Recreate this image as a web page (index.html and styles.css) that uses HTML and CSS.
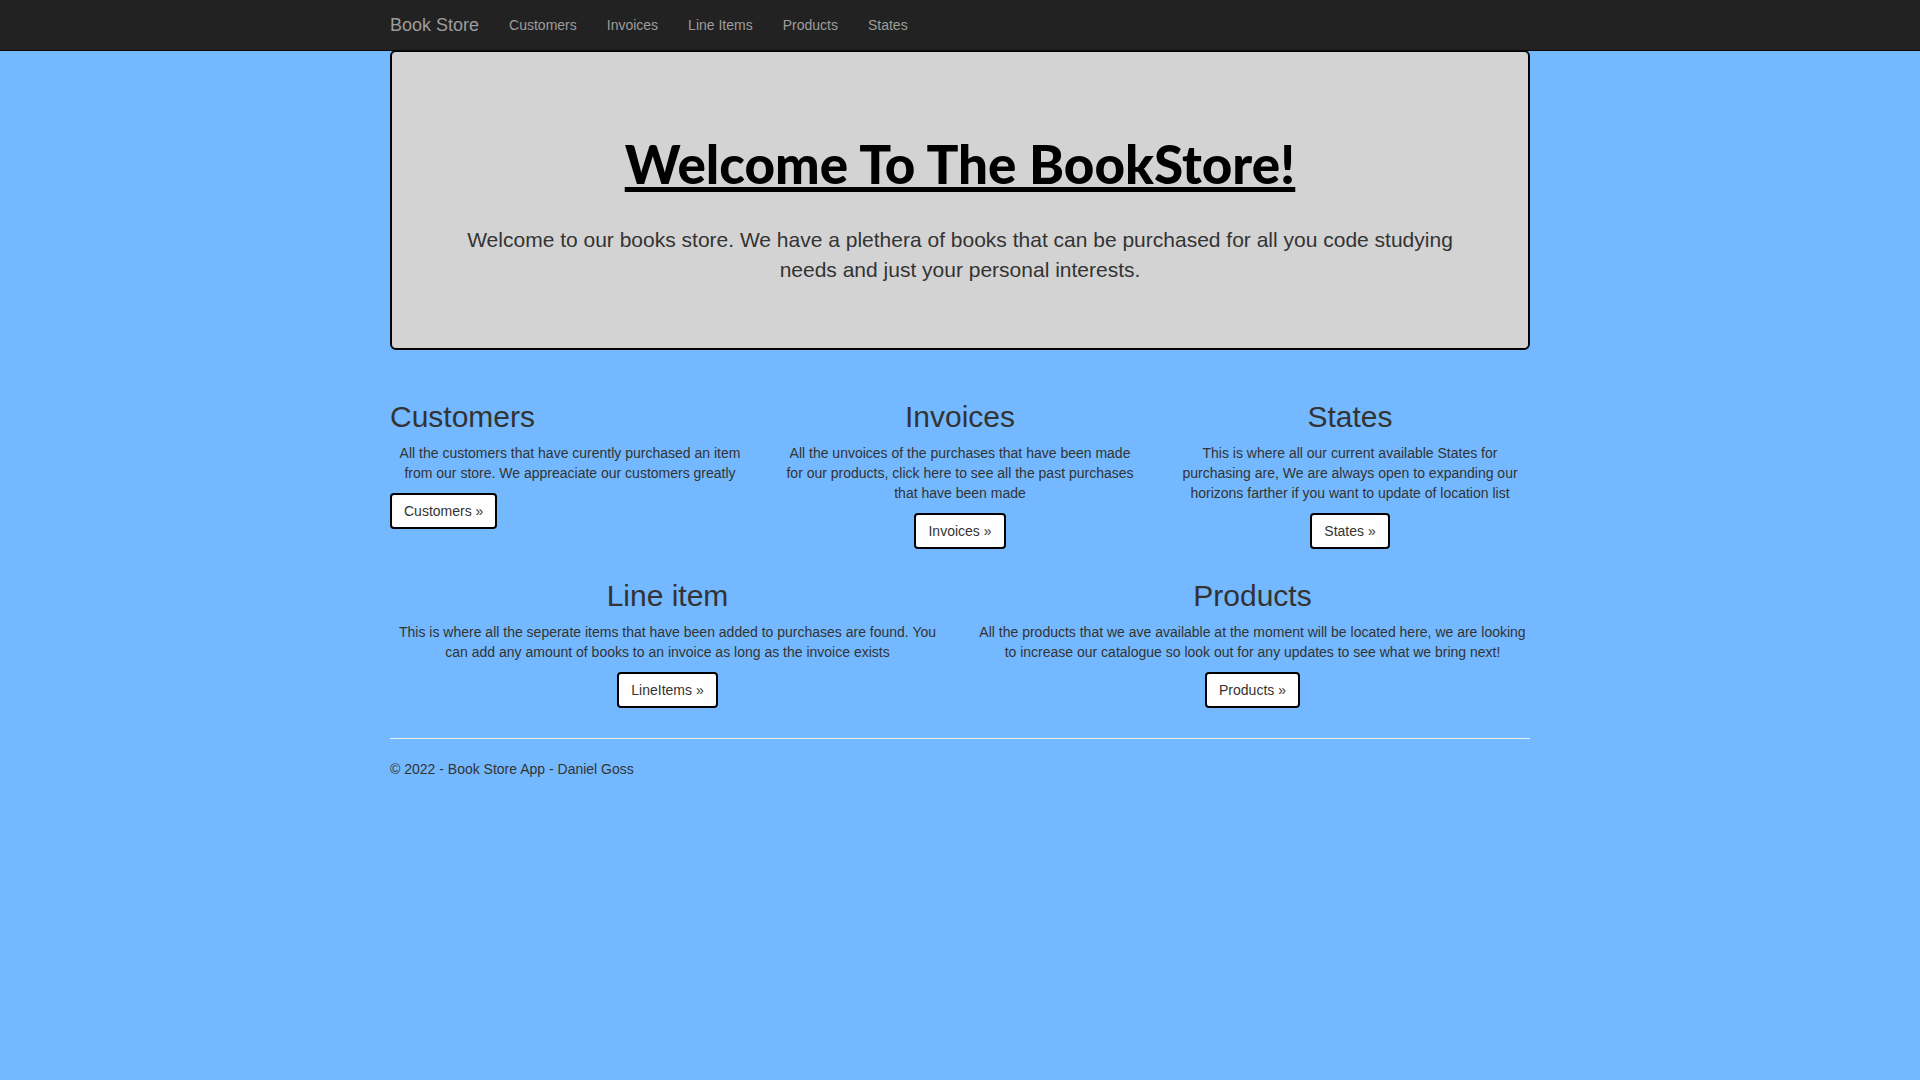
FILE: index.html
```html
<!DOCTYPE html>
<html lang="en">
<head>
<meta charset="utf-8">
<meta name="viewport" content="width=device-width, initial-scale=1">
<title>Book Store</title>
<link rel="stylesheet" href="styles.css">
</head>
<body>
<header class="navbar">
  <nav class="container navbar-inner">
    <a class="navbar-brand" href="#">Book Store</a>
    <ul class="navbar-nav">
      <li><a href="#">Customers</a></li>
      <li><a href="#">Invoices</a></li>
      <li><a href="#">Line Items</a></li>
      <li><a href="#">Products</a></li>
      <li><a href="#">States</a></li>
    </ul>
  </nav>
</header>
<main class="container">
  <section class="jumbotron">
    <h1>Welcome To The BookStore!</h1>
    <p class="lead">Welcome to our books store. We have a plethera of books that can be purchased for all you code studying needs and just your personal interests.</p>
  </section>
  <div class="row row-thirds">
    <section class="card card-start">
      <h2>Customers</h2>
      <p>All the customers that have curently purchased an item from our store. We appreaciate our customers greatly</p>
      <a class="btn" href="#">Customers »</a>
    </section>
    <section class="card">
      <h2>Invoices</h2>
      <p>All the unvoices of the purchases that have been made for our products, click here to see all the past purchases that have been made</p>
      <a class="btn" href="#">Invoices »</a>
    </section>
    <section class="card">
      <h2>States</h2>
      <p>This is where all our current available States for purchasing are, We are always open to expanding our horizons farther if you want to update of location list</p>
      <a class="btn" href="#">States »</a>
    </section>
  </div>
  <div class="row row-halves">
    <section class="card">
      <h2>Line item</h2>
      <p>This is where all the seperate items that have been added to purchases are found. You can add any amount of books to an invoice as long as the invoice exists</p>
      <a class="btn" href="#">LineItems »</a>
    </section>
    <section class="card">
      <h2>Products</h2>
      <p>All the products that we ave available at the moment will be located here, we are looking to increase our catalogue so look out for any updates to see what we bring next!</p>
      <a class="btn" href="#">Products »</a>
    </section>
  </div>
  <footer class="footer">
    <p>© 2022 - Book Store App - Daniel Goss</p>
  </footer>
</main>
</body>
</html>
```
FILE: styles.css
```css
* {
  box-sizing: border-box;
}

body {
  margin: 0;
  background: #74b9ff;
  color: #333;
  font-family: "Helvetica Neue", Helvetica, Arial, "Liberation Sans", sans-serif;
  font-size: 14px;
  line-height: 20px;
}

h1,
h2,
p,
ul {
  margin: 0;
}

.container {
  max-width: 1170px;
  margin: 0 auto;
  padding: 0 15px;
}

.navbar {
  position: sticky;
  top: 0;
  z-index: 10;
  margin-bottom: -1px;
  background: #222;
  border-bottom: 1px solid #080808;
}

.navbar-inner {
  display: flex;
  flex-wrap: wrap;
  padding: 0;
}

.navbar a {
  display: block;
  padding: 15px;
  color: #9d9d9d;
  text-decoration: none;
}

.navbar a:hover {
  color: #fff;
}

.navbar .navbar-brand {
  font-size: 18px;
}

.navbar-nav {
  display: flex;
  flex-wrap: wrap;
  padding: 0;
  list-style: none;
}

.jumbotron {
  margin-bottom: 30px;
  padding: 78px 60px 63px;
  background: #d3d3d3;
  border: 2px solid #000;
  border-radius: 6px;
  text-align: center;
}

.jumbotron h1 {
  margin-bottom: 27px;
  color: #000;
  font-family: "Gill Sans", "Gill Sans MT", Lato, sans-serif;
  font-size: 53px;
  font-weight: 900;
  line-height: 68px;
  text-decoration: underline;
  text-decoration-thickness: 5px;
  text-decoration-skip-ink: none;
  text-underline-offset: 3px;
}

.lead {
  font-size: 21px;
  line-height: 30px;
}

.row {
  display: grid;
  gap: 0 30px;
}

.row-thirds {
  grid-template-columns: repeat(auto-fit, minmax(300px, 1fr));
}

.row-halves {
  grid-template-columns: repeat(auto-fit, minmax(420px, 1fr));
}

.card {
  display: flex;
  flex-direction: column;
  align-items: center;
  gap: 10px;
  padding: 20px 0 10px;
  text-align: center;
}

.card-start {
  align-items: flex-start;
}

.card h2 {
  font-size: 30px;
  font-weight: 500;
  line-height: 33px;
}

.btn {
  padding: 6px 12px;
  background: #fff;
  border: 2px solid #000;
  border-radius: 4px;
  color: #333;
  text-decoration: none;
}

.btn:hover {
  background: #e6e6e6;
}

.footer {
  margin-top: 20px;
  padding: 20px 0 10px;
  border-top: 1px solid #eee;
}
```
